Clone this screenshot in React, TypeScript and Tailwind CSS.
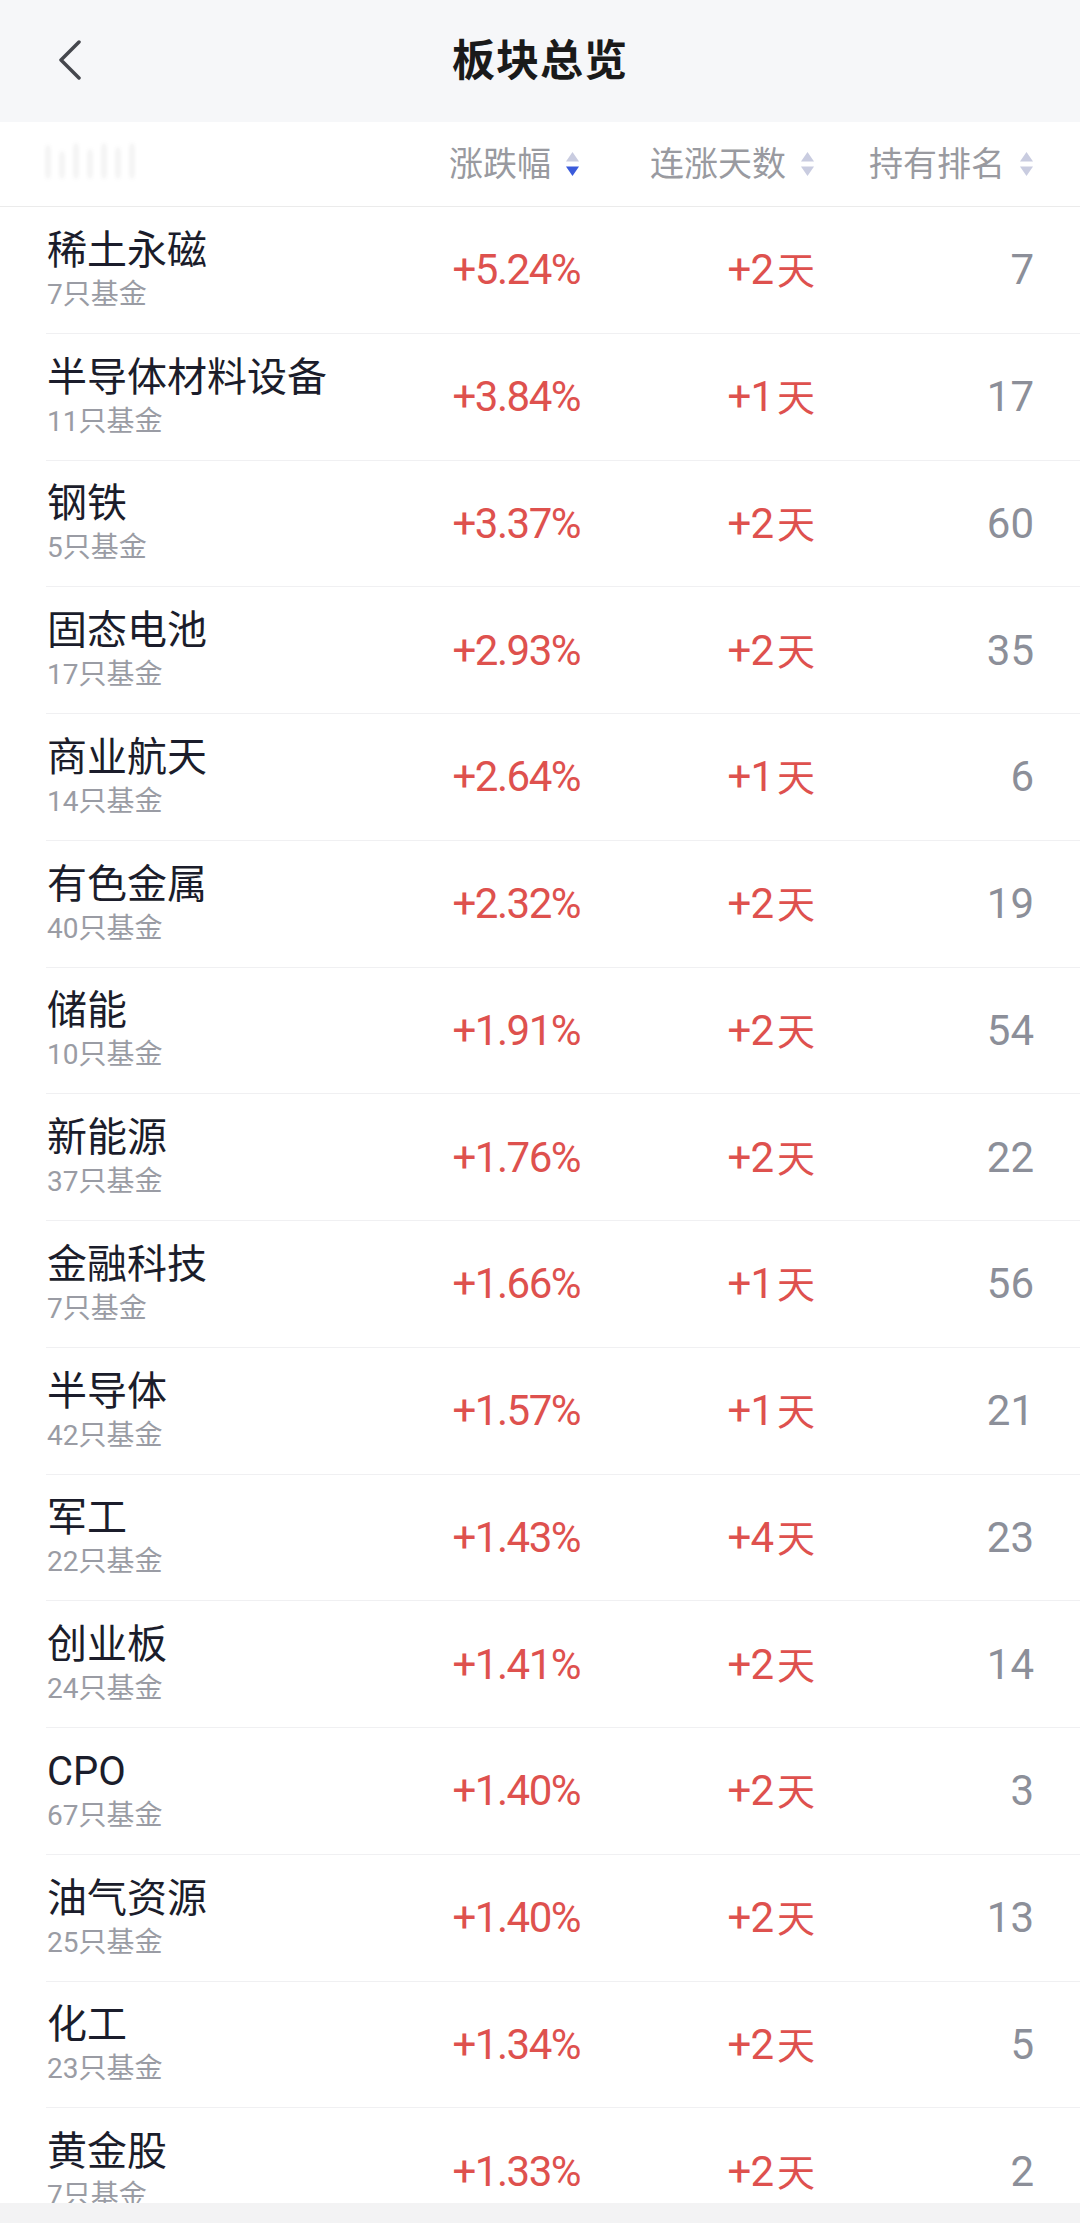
import React from "react";

const rows: [string, string, string, string, string][] = [
  ["稀土永磁", "7只基金", "+5.24%", "+2", "7"],
  ["半导体材料设备", "11只基金", "+3.84%", "+1", "17"],
  ["钢铁", "5只基金", "+3.37%", "+2", "60"],
  ["固态电池", "17只基金", "+2.93%", "+2", "35"],
  ["商业航天", "14只基金", "+2.64%", "+1", "6"],
  ["有色金属", "40只基金", "+2.32%", "+2", "19"],
  ["储能", "10只基金", "+1.91%", "+2", "54"],
  ["新能源", "37只基金", "+1.76%", "+2", "22"],
  ["金融科技", "7只基金", "+1.66%", "+1", "56"],
  ["半导体", "42只基金", "+1.57%", "+1", "21"],
  ["军工", "22只基金", "+1.43%", "+4", "23"],
  ["创业板", "24只基金", "+1.41%", "+2", "14"],
  ["CPO", "67只基金", "+1.40%", "+2", "3"],
  ["油气资源", "25只基金", "+1.40%", "+2", "13"],
  ["化工", "23只基金", "+1.34%", "+2", "5"],
  ["黄金股", "7只基金", "+1.33%", "+2", "2"],
];

const FONT = { fontFamily: '"Roboto", "Noto Sans CJK SC", sans-serif' };

function SortIcon({ active }: { active?: boolean }) {
  return (
    <svg width="15" height="26" viewBox="0 0 15 26" className="ml-[14px] shrink-0">
      <path d="M7.5 1 L14 10.5 L1 10.5 Z" fill="#c9cce0" />
      <path d="M7.5 25 L14 15.5 L1 15.5 Z" fill={active ? "#3b5bdb" : "#c9cce0"} />
    </svg>
  );
}

export default function App() {
  return (
    <div
      className="w-[1080px] h-[2223px] flex flex-col overflow-hidden bg-white"
      style={FONT}
    >
      {/* Nav bar */}
      <div className="relative h-[122px] shrink-0 bg-[#f6f7f9] flex items-center justify-center">
        <div className="absolute left-[56px] top-[40px]">
          <svg width="28" height="40" viewBox="0 0 28 40">
            <path
              d="M23 2 L5 20 L23 38"
              fill="none"
              stroke="#45474d"
              strokeWidth="3.5"
              strokeLinecap="round"
              strokeLinejoin="round"
            />
          </svg>
        </div>
        <span className="text-[43px] font-semibold text-[#1a1a1a] tracking-[1px]">
          板块总览
        </span>
      </div>

      {/* Column header */}
      <div className="h-[85px] shrink-0 flex items-center pl-[47px] pr-[46px] border-b border-[#ebebeb]">
        <div className="flex-1 flex items-center">
          <div className="w-[136px] h-[36px] mt-[-8px] flex items-end gap-[12px] opacity-25 blur-[2px]">
            <div className="w-[2px] h-[32px] bg-[#888]" />
            <div className="w-[2px] h-[26px] bg-[#888]" />
            <div className="w-[2px] h-[34px] bg-[#888]" />
            <div className="w-[2px] h-[28px] bg-[#888]" />
            <div className="w-[2px] h-[34px] bg-[#888]" />
            <div className="w-[2px] h-[30px] bg-[#888]" />
            <div className="w-[2px] h-[34px] bg-[#888]" />
          </div>
        </div>
        <div className="w-[200px] flex items-center justify-end">
          <span className="text-[34px] text-[#999aa0]">涨跌幅</span>
          <SortIcon active />
        </div>
        <div className="w-[235px] flex items-center justify-end">
          <span className="text-[34px] text-[#999aa0]">连涨天数</span>
          <SortIcon />
        </div>
        <div className="w-[219px] flex items-center justify-end">
          <span className="text-[34px] text-[#999aa0]">持有排名</span>
          <SortIcon />
        </div>
      </div>

      {/* List */}
      <div className="flex-1 overflow-hidden">
        {rows.map(([name, sub, pct, days, rank]) => (
          <div key={name} className="h-[126.75px] pl-[46px]">
            <div className="h-full flex items-center pr-[46px] border-b border-[#f0f0f2]">
              <div className="flex-1 flex flex-col pl-[1px] pt-[2px]">
                <span className="text-[40px] leading-[48px] text-[#1b1d2b]">
                  {name}
                </span>
                <span className="text-[28px] leading-[40px] text-[#9a9ca4]">
                  {sub}
                </span>
              </div>
              <div className="w-[200px] text-right">
                <span className="text-[42px] font-normal tracking-[-1.5px] text-[#de514e]">
                  {pct}
                </span>
              </div>
              <div className="w-[235px] text-right">
                <span className="text-[42px] font-normal tracking-[-1px] text-[#de514e]">
                  {days}
                </span>
                <span className="text-[38px] text-[#de514e] ml-[4px]">天</span>
              </div>
              <div className="w-[219px] text-right">
                <span className="text-[42px] font-normal text-[#8c8f99]">
                  {rank}
                </span>
              </div>
            </div>
          </div>
        ))}
      </div>

      {/* Bottom bar */}
      <div className="h-[20px] shrink-0 bg-[#f3f3f4]" />
    </div>
  );
}
